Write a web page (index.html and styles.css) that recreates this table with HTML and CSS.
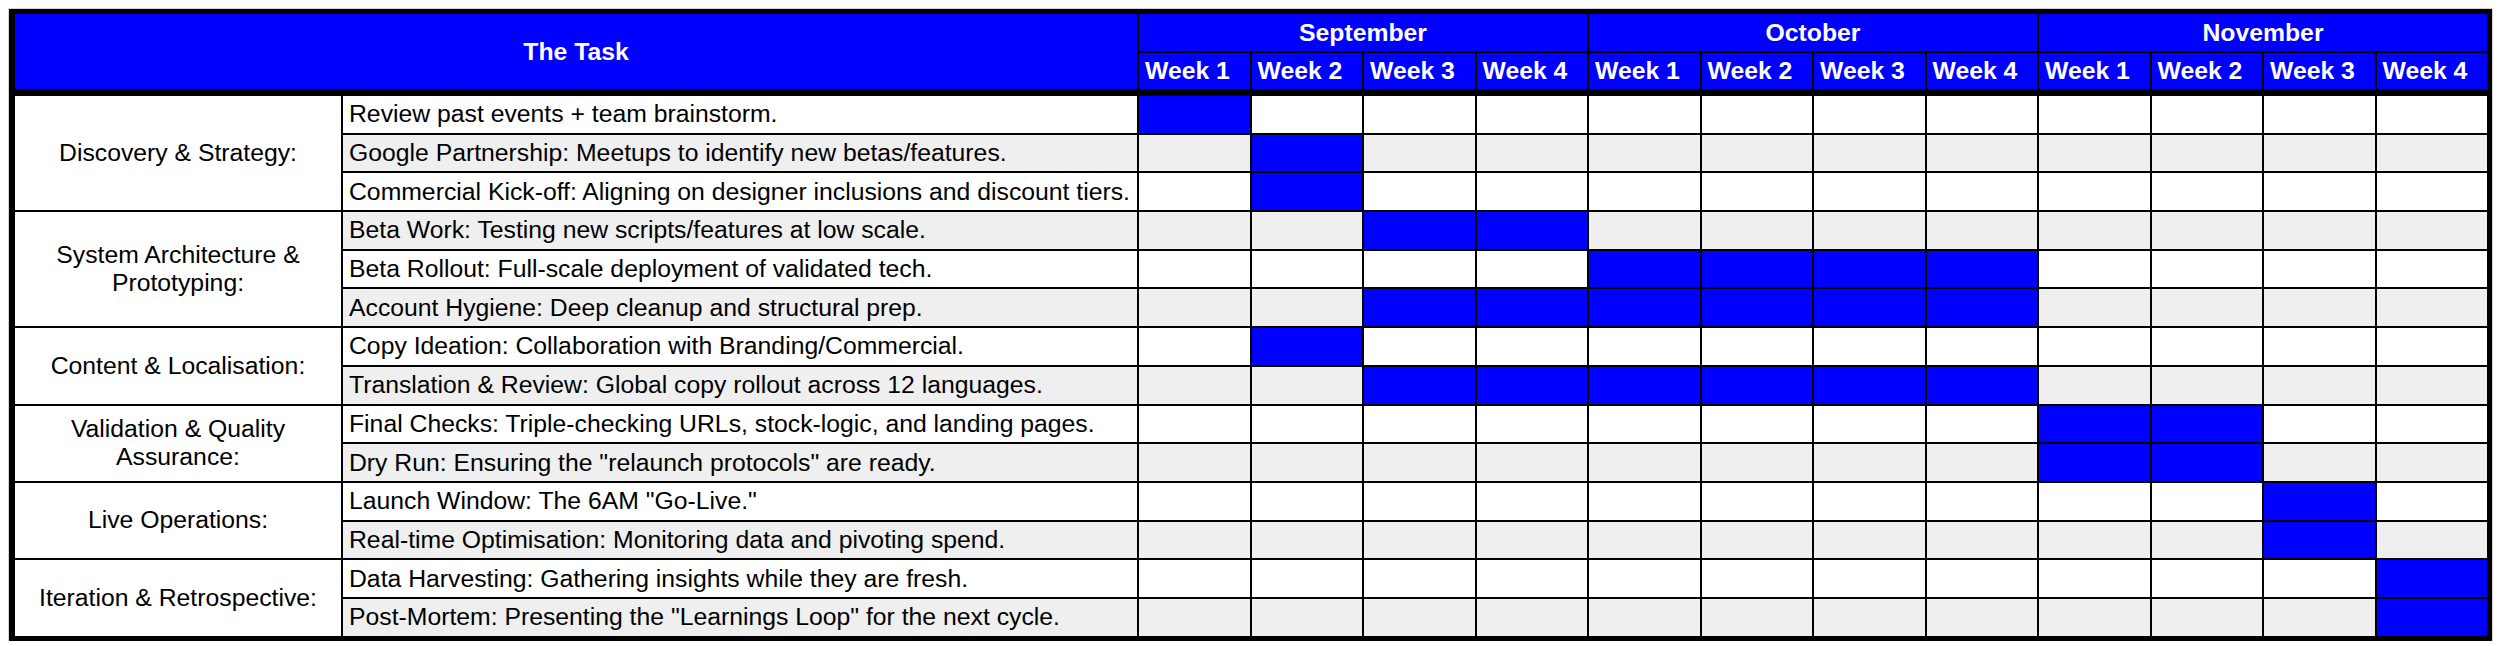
FILE: index.html
```html
<!DOCTYPE html>
<html>
<head>
<meta charset="utf-8">
<link rel="stylesheet" href="styles.css">
</head>
<body>
<div class="chart">
  <div class="hd title">The Task</div>
  <div class="hd month">September</div>
  <div class="hd month">October</div>
  <div class="hd month">November</div>
  <div class="hd week">Week 1</div><div class="hd week">Week 2</div><div class="hd week">Week 3</div><div class="hd week">Week 4</div>
  <div class="hd week">Week 1</div><div class="hd week">Week 2</div><div class="hd week">Week 3</div><div class="hd week">Week 4</div>
  <div class="hd week">Week 1</div><div class="hd week">Week 2</div><div class="hd week">Week 3</div><div class="hd week">Week 4</div>

  <div class="grp span3">Discovery &amp; Strategy:</div>
  <div class="task">Review past events + team brainstorm.</div>
  <div class="wk on"></div><div class="wk"></div><div class="wk"></div><div class="wk"></div><div class="wk"></div><div class="wk"></div><div class="wk"></div><div class="wk"></div><div class="wk"></div><div class="wk"></div><div class="wk"></div><div class="wk"></div>
  <div class="task alt">Google Partnership: Meetups to identify new betas/features.</div>
  <div class="wk alt"></div><div class="wk on"></div><div class="wk alt"></div><div class="wk alt"></div><div class="wk alt"></div><div class="wk alt"></div><div class="wk alt"></div><div class="wk alt"></div><div class="wk alt"></div><div class="wk alt"></div><div class="wk alt"></div><div class="wk alt"></div>
  <div class="task">Commercial Kick-off: Aligning on designer inclusions and discount tiers.</div>
  <div class="wk"></div><div class="wk on"></div><div class="wk"></div><div class="wk"></div><div class="wk"></div><div class="wk"></div><div class="wk"></div><div class="wk"></div><div class="wk"></div><div class="wk"></div><div class="wk"></div><div class="wk"></div>

  <div class="grp span3">System Architecture &amp; Prototyping:</div>
  <div class="task alt">Beta Work: Testing new scripts/features at low scale.</div>
  <div class="wk alt"></div><div class="wk alt"></div><div class="wk on"></div><div class="wk on"></div><div class="wk alt"></div><div class="wk alt"></div><div class="wk alt"></div><div class="wk alt"></div><div class="wk alt"></div><div class="wk alt"></div><div class="wk alt"></div><div class="wk alt"></div>
  <div class="task">Beta Rollout: Full-scale deployment of validated tech.</div>
  <div class="wk"></div><div class="wk"></div><div class="wk"></div><div class="wk"></div><div class="wk on"></div><div class="wk on"></div><div class="wk on"></div><div class="wk on"></div><div class="wk"></div><div class="wk"></div><div class="wk"></div><div class="wk"></div>
  <div class="task alt">Account Hygiene: Deep cleanup and structural prep.</div>
  <div class="wk alt"></div><div class="wk alt"></div><div class="wk on"></div><div class="wk on"></div><div class="wk on"></div><div class="wk on"></div><div class="wk on"></div><div class="wk on"></div><div class="wk alt"></div><div class="wk alt"></div><div class="wk alt"></div><div class="wk alt"></div>

  <div class="grp span2">Content &amp; Localisation:</div>
  <div class="task">Copy Ideation: Collaboration with Branding/Commercial.</div>
  <div class="wk"></div><div class="wk on"></div><div class="wk"></div><div class="wk"></div><div class="wk"></div><div class="wk"></div><div class="wk"></div><div class="wk"></div><div class="wk"></div><div class="wk"></div><div class="wk"></div><div class="wk"></div>
  <div class="task alt">Translation &amp; Review: Global copy rollout across 12 languages.</div>
  <div class="wk alt"></div><div class="wk alt"></div><div class="wk on"></div><div class="wk on"></div><div class="wk on"></div><div class="wk on"></div><div class="wk on"></div><div class="wk on"></div><div class="wk alt"></div><div class="wk alt"></div><div class="wk alt"></div><div class="wk alt"></div>

  <div class="grp span2">Validation &amp; Quality Assurance:</div>
  <div class="task">Final Checks: Triple-checking URLs, stock-logic, and landing pages.</div>
  <div class="wk"></div><div class="wk"></div><div class="wk"></div><div class="wk"></div><div class="wk"></div><div class="wk"></div><div class="wk"></div><div class="wk"></div><div class="wk on"></div><div class="wk on"></div><div class="wk"></div><div class="wk"></div>
  <div class="task alt">Dry Run: Ensuring the "relaunch protocols" are ready.</div>
  <div class="wk alt"></div><div class="wk alt"></div><div class="wk alt"></div><div class="wk alt"></div><div class="wk alt"></div><div class="wk alt"></div><div class="wk alt"></div><div class="wk alt"></div><div class="wk on"></div><div class="wk on"></div><div class="wk alt"></div><div class="wk alt"></div>

  <div class="grp span2">Live Operations:</div>
  <div class="task">Launch Window: The 6AM "Go-Live."</div>
  <div class="wk"></div><div class="wk"></div><div class="wk"></div><div class="wk"></div><div class="wk"></div><div class="wk"></div><div class="wk"></div><div class="wk"></div><div class="wk"></div><div class="wk"></div><div class="wk on"></div><div class="wk"></div>
  <div class="task alt">Real-time Optimisation: Monitoring data and pivoting spend.</div>
  <div class="wk alt"></div><div class="wk alt"></div><div class="wk alt"></div><div class="wk alt"></div><div class="wk alt"></div><div class="wk alt"></div><div class="wk alt"></div><div class="wk alt"></div><div class="wk alt"></div><div class="wk alt"></div><div class="wk on"></div><div class="wk alt"></div>

  <div class="grp span2">Iteration &amp; Retrospective:</div>
  <div class="task">Data Harvesting: Gathering insights while they are fresh.</div>
  <div class="wk"></div><div class="wk"></div><div class="wk"></div><div class="wk"></div><div class="wk"></div><div class="wk"></div><div class="wk"></div><div class="wk"></div><div class="wk"></div><div class="wk"></div><div class="wk"></div><div class="wk on"></div>
  <div class="task alt">Post-Mortem: Presenting the "Learnings Loop" for the next cycle.</div>
  <div class="wk alt"></div><div class="wk alt"></div><div class="wk alt"></div><div class="wk alt"></div><div class="wk alt"></div><div class="wk alt"></div><div class="wk alt"></div><div class="wk alt"></div><div class="wk alt"></div><div class="wk alt"></div><div class="wk alt"></div><div class="wk on"></div>
</div>
</body>
</html>
```

FILE: styles.css
```css
html, body {
  margin: 0;
  padding: 0;
  background: #ffffff;
}

body {
  padding: 9px 0 0 9px;
  font-family: "Liberation Sans", Arial, Helvetica, sans-serif;
}

.chart {
  display: grid;
  grid-template-columns: 326px 794px repeat(12, 110.5px);
  grid-template-rows: 37px 41px;
  grid-auto-rows: 36.7px;
  gap: 2px;
  width: max-content;
  padding: 5px 5px 5px 6px;
  background: #000000;
  box-shadow: 0 0 0 1px #d4d4d4;
  font-size: 24.75px;
  color: #000000;
}

.hd {
  background: #0000ff;
  color: #ffffff;
  font-weight: bold;
  display: flex;
  align-items: center;
}

.title {
  grid-column: span 2;
  grid-row: span 2;
  justify-content: center;
  margin-bottom: 5px;
}

.month {
  grid-column: span 4;
  justify-content: center;
}

.week {
  padding-left: 6px;
  margin-bottom: 5px;
}

.grp {
  background: #ffffff;
  display: flex;
  align-items: center;
  justify-content: center;
  text-align: center;
  padding: 0 12px;
  line-height: 1.15;
}

.span3 {
  grid-row: span 3;
}

.span2 {
  grid-row: span 2;
}

.task {
  background: #ffffff;
  display: flex;
  align-items: center;
  padding-left: 6px;
  white-space: nowrap;
  overflow: hidden;
}

.wk {
  background: #ffffff;
}

.alt {
  background: #efefef;
}

.wk.on {
  background: #0000ff;
}
```
